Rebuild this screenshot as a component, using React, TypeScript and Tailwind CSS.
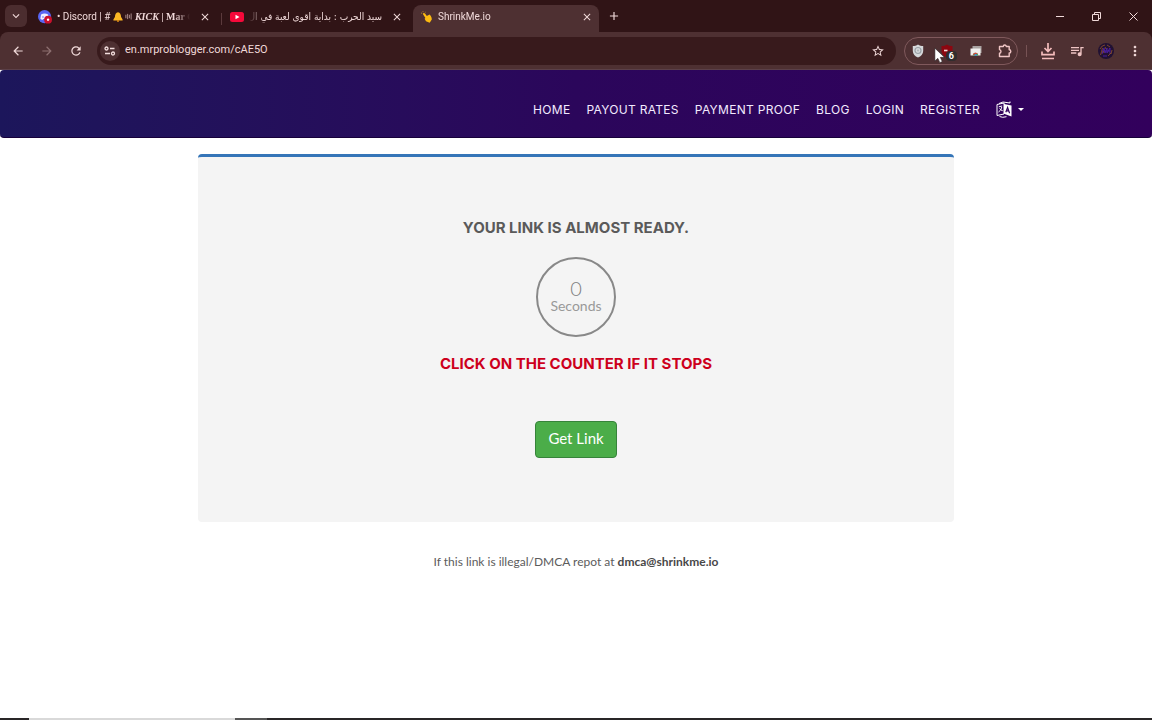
import type { ReactNode } from 'react';
import {
  MdAdd,
  MdArrowBack,
  MdArrowForward,
  MdClose,
  MdKeyboardArrowDown,
  MdMoreVert,
  MdQueueMusic,
  MdRefresh,
  MdStarBorder,
} from 'react-icons/md';

const navLinks = ['Home', 'Payout Rates', 'Payment Proof', 'Blog', 'Login', 'Register'];

function DiscordIcon() {
  return (
    <svg viewBox="0 0 16 16" className="size-[14px] shrink-0" aria-hidden="true">
      <circle cx="7.500" cy="7.500" r="7.500" fill="#5865f2" />
      <path d="M3.500 5q4-2 8 0l.8 5q-1.800 1.700-3 1.200l-.4-1H6l-.5 1Q4 11.500 2.700 10Z" fill="#f1efff" />
      <circle cx="5.700" cy="8" r=".9" fill="#5865f2" />
      <circle cx="11.500" cy="11" r="4.500" fill="#c9102c" />
      <circle cx="11.500" cy="11" r="1.400" fill="#fff" />
    </svg>
  );
}

function BellIcon() {
  return (
    <svg viewBox="0 0 10 10" className="inline size-[10px]" aria-hidden="true">
      <path d="M5 .2C2.800.5 2.100 2.400 1.900 5L.4 7.600v.8h9.200v-.8L8.100 5C7.900 2.400 7.200.5 5 .2Z" fill="#fbb724" />
      <circle cx="5" cy="9" r="1" fill="#e08a12" />
    </svg>
  );
}

function SpeakerIcon() {
  return (
    <svg viewBox="0 0 8 10" className="inline h-[9px] w-[7px]" fill="none" stroke="#b99c9d" aria-hidden="true">
      <path d="M1 3v4M3 2v6M5 3v4M7 1.500v7" />
    </svg>
  );
}

function YoutubeIcon() {
  return (
    <svg viewBox="0 0 14 10" className="h-[10px] w-[14px] shrink-0" aria-hidden="true">
      <rect width="14" height="10" rx="2.500" fill="#f5093a" />
      <path d="M5.500 2.800 9.500 5l-4 2.200Z" fill="#fff" />
    </svg>
  );
}

function HandIcon() {
  return (
    <svg viewBox="0 0 12 12" className="size-3 shrink-0" aria-hidden="true">
      <path
        d="M2.300 2.200c.7-.5 1.300-.2 1.700.4l1.800 2.500 2.800-1.500c1.200 1 2.300 3.200 2.200 5L8.700 11.700 5 10.300 3.600 7.700l.8-.8L2 3.300c-.2-.4-.1-.8.3-1.100Z"
        fill="#fdbb11"
      />
      <path d="M.8 2.800.3 1.500M2 1.200 2 .2M3.800 1.800l.8-.7" stroke="#c88f2a" strokeWidth=".8" />
    </svg>
  );
}

function SiteInfoIcon() {
  return (
    <svg viewBox="0 0 12 10" className="h-[10px] w-3" fill="none" stroke="#f3dede" strokeWidth="1.300" aria-hidden="true">
      <circle cx="2.500" cy="2.500" r="1.500" />
      <path d="M6 2.500h4.500M1 7.500h5" />
      <circle cx="9" cy="7.500" r="1.500" />
    </svg>
  );
}

function ShieldIcon() {
  return (
    <svg viewBox="0 0 12 14" className="h-[14px] w-3" aria-hidden="true">
      <path d="M6 .5C4.500 1.500 2.500 2 .8 2v5c0 3 2.200 5.300 5.200 6.500C9 12.300 11.200 10 11.200 7V2C9.500 2 7.500 1.500 6 .5Z" fill="#d5d8da" />
      <circle cx="6" cy="6.500" r="3" fill="none" stroke="#9ba2a7" strokeWidth="1.200" />
      <circle cx="6" cy="6.500" r="1" fill="#aeb4b8" />
    </svg>
  );
}

function BlockerIcon() {
  return (
    <svg viewBox="0 0 12 14" className="h-[14px] w-3" aria-hidden="true">
      <path d="M6 .5C4.500 1.500 2.500 2 .5 2v5c0 3 2.500 5.300 5.500 6.500C9 12.300 11.500 10 11.500 7V2C9.500 2 7.500 1.500 6 .5Z" fill="#8c0710" />
      <path d="M3 6.500h3.500" stroke="#f6d9d9" strokeWidth="1.600" />
    </svg>
  );
}

function StoreIcon() {
  return (
    <svg viewBox="0 0 12 12" className="size-3" aria-hidden="true">
      <path d="M2.500 1h9v7h-9Z" fill="#aaa3a2" />
      <path d="M.5 3.500h10v7H.5Z" fill="#f2f0ef" />
      <path d="M2.800 10.500a2.700 2.700 0 0 1 5.400 0Z" fill="#3fa45b" />
      <path d="M2.800 10.300a2.700 2.700 0 0 1 5-1.300L5.500 9Z" fill="#d9483b" />
      <circle cx="5.600" cy="10" r="1" fill="#4a84df" />
    </svg>
  );
}

function ExtensionsIcon() {
  return (
    <svg viewBox="0 0 14 14" className="size-[14px]" fill="none" stroke="#f0c5c5" strokeWidth="1.400" strokeLinejoin="round" aria-hidden="true">
      <path d="M1.500 2.500h3.800a1.500 1.500 0 0 1 3 0h2.900v3.300a1.600 1.600 0 0 1 0 3.200v3.500H1.500V9.300a1.900 1.900 0 0 0 0-3.700Z" />
    </svg>
  );
}

function DownloadIcon() {
  return (
    <svg viewBox="0 0 14 18" className="h-[18px] w-[14px]" fill="none" stroke="#f4bcbc" strokeWidth="1.700" aria-hidden="true">
      <path d="M7 1v8.500M3.500 6 7 9.500 10.500 6M1 9.500v3.200h12V9.500M1 16.500h12" />
    </svg>
  );
}

function AvatarIcon() {
  return (
    <svg viewBox="0 0 16 16" className="size-4" fill="none" aria-hidden="true">
      <circle cx="8" cy="8" r="8" fill="#211133" />
      <path d="M4 11 6 5l1 5 2-5v5l3-5v6M4 8h8M5 13h4" stroke="#4a1f9c" />
      <path d="M2 6q2-4 5-4M9 2l3 2M2.500 12q1-3 2-7M13 11l1-4M10 13l3-3M7 4l1 2M5 8l1 2" stroke="#94522b" strokeWidth=".8" />
    </svg>
  );
}

function TranslateIcon() {
  return (
    <svg viewBox="0 0 16 17" className="h-[17px] w-4" aria-hidden="true">
      <path d="M1 3.500 8 2v11L1 14.500Z" fill="none" stroke="#fff" />
      <path d="M3 2.500 7 1l7 1V.5" fill="none" stroke="#fff" />
      <path d="M8 3l7.500 1.500v11L8 12.800Z" fill="#fff" />
      <path d="M2.800 5.800 6.200 5M3.500 7.500q1.500 2 3.200 2.200M5.800 6q-.6 3.500-3.300 5M3.500 15.500q3 1.500 7 .2" fill="none" stroke="#fff" />
      <path d="M9.800 11.300 11.600 6.500l2 5.700M10.400 9.600l2.600.6" fill="none" stroke="#30005c" strokeWidth="1.200" />
    </svg>
  );
}

function CursorIcon() {
  return (
    <svg viewBox="0 0 10 15" className="absolute top-[47px] left-[934px] h-[17px] w-[11px]" aria-hidden="true">
      <path d="M.8.8v11.700l2.700-2.400 1.800 3.900 2.200-1-1.800-3.800h3.800Z" fill="#fff" stroke="#252021" strokeWidth=".5" />
    </svg>
  );
}

function IconButton({ label, children }: { label: string; children: ReactNode }) {
  return (
    <button type="button" aria-label={label} className="relative flex h-7 w-[29px] shrink-0 items-center justify-center">
      {children}
    </button>
  );
}

function Tab({ icon, rtl, active, children }: { icon: ReactNode; rtl?: boolean; active?: boolean; children: ReactNode }) {
  return (
    <div
      className={`flex h-[27px] items-center gap-[5px] pb-1 pl-2 ${
        active ? 'w-[186px] rounded-t-lg bg-[#4e3032] pr-[2px]' : 'w-[191px] pr-[6px]'
      }`}
    >
      {icon}
      <span
        dir={rtl ? 'rtl' : 'ltr'}
        className={`min-w-0 flex-1 overflow-hidden text-[10px] leading-4 whitespace-nowrap ${
          rtl
            ? "[mask-image:linear-gradient(to_left,black_88%,transparent)] font-['DejaVu_Sans_Condensed','DejaVu_Sans',sans-serif]"
            : '[mask-image:linear-gradient(to_right,black_88%,transparent)]'
        }`}
      >
        {children}
      </span>
      <button type="button" aria-label="Close tab" className="flex w-5 items-center justify-center">
        <MdClose className="size-3" />
      </button>
    </div>
  );
}

function BrowserBar() {
  return (
    <header className="relative bg-[#301416] font-[Roboto,sans-serif] text-[#f0d9d9]">
      <div className="flex h-8 items-end">
        <button type="button" aria-label="Search tabs" className="mb-[5px] ml-[5px] flex size-[22px] items-center justify-center rounded-md bg-[#4b2d2f]">
          <MdKeyboardArrowDown className="size-[14px]" />
        </button>
        <div className="ml-[3px] flex items-center">
          <Tab icon={<DiscordIcon />}>
            • Discord | # <BellIcon /> <SpeakerIcon />{' '}
            <span className="font-['Liberation_Serif',serif] font-bold">
              <i>KICK</i> | Mar G
            </span>
          </Tab>
          <span className="h-3 w-px bg-[#5b3a3c]" />
          <Tab rtl icon={<YoutubeIcon />}>
            سيد الحرب : بداية اقوى لعبة في ال
          </Tab>
          <Tab active icon={<HandIcon />}>
            ShrinkMe.io
          </Tab>
        </div>
        <div className="flex h-8 items-center">
          <IconButton label="New tab">
            <MdAdd className="size-[14px]" />
          </IconButton>
        </div>
        <div className="ml-auto flex h-8 items-center">
          <button type="button" aria-label="Minimize" className="flex h-8 w-[37px] items-center justify-center">
            <span className="h-px w-2 bg-current" />
          </button>
          <button type="button" aria-label="Restore" className="flex h-8 w-[37px] items-center justify-center">
            <svg viewBox="0 0 9 9" className="size-[9px]" fill="none" stroke="currentColor">
              <path d="M.5 2.500h6v6h-6ZM2.500 2.500v-2h6v6h-2" />
            </svg>
          </button>
          <button type="button" aria-label="Close" className="flex h-8 w-[37px] items-center justify-center">
            <svg viewBox="0 0 9 9" className="size-[9px]" fill="none" stroke="currentColor">
              <path d="m.5.5 8 8M8.500.5l-8 8" />
            </svg>
          </button>
        </div>
      </div>
      <div className="flex h-[38px] items-center rounded-t-lg border-b border-[#5b4048] bg-[#4e3032] pr-[3px] pl-[3px]">
        <IconButton label="Back">
          <MdArrowBack className="size-[14px]" />
        </IconButton>
        <IconButton label="Forward">
          <MdArrowForward className="size-[14px] text-[#8e7071]" />
        </IconButton>
        <IconButton label="Reload">
          <MdRefresh className="size-[14px]" />
        </IconButton>
        <div className="ml-[7px] flex h-7 flex-1 items-center rounded-full bg-[#381a1c] pl-[3px]">
          <button type="button" aria-label="Site information" className="flex size-5 items-center justify-center rounded-full bg-[#4e3032]">
            <SiteInfoIcon />
          </button>
          <input
            aria-label="Address"
            defaultValue="en.mrproblogger.com/cAE5O"
            className="ml-[5px] min-w-0 flex-1 bg-transparent text-[11px] outline-none"
          />
          <IconButton label="Bookmark">
            <MdStarBorder className="size-[14px]" />
          </IconButton>
          <span className="w-1" />
        </div>
        <div className="ml-2 flex h-7 w-[114px] items-center justify-center rounded-full border border-[#80595c]">
          <IconButton label="Privacy shield">
            <ShieldIcon />
          </IconButton>
          <IconButton label="Content blocker">
            <BlockerIcon />
            <span className="absolute right-1 bottom-1 rounded-sm bg-[#302d2e] px-[3px] text-[9px] leading-[10px] font-bold text-white">6</span>
          </IconButton>
          <IconButton label="Web store">
            <StoreIcon />
          </IconButton>
          <IconButton label="Extensions">
            <ExtensionsIcon />
          </IconButton>
        </div>
        <span className="mr-[6px] ml-2 h-3 w-px bg-[#775355]" />
        <IconButton label="Downloads">
          <DownloadIcon />
        </IconButton>
        <IconButton label="Media">
          <MdQueueMusic className="size-4 text-[#f0c5c5]" />
        </IconButton>
        <IconButton label="Profile">
          <AvatarIcon />
        </IconButton>
        <IconButton label="Menu">
          <MdMoreVert className="size-4" />
        </IconButton>
      </div>
      <CursorIcon />
    </header>
  );
}

export default function App() {
  return (
    <div className="flex min-h-screen flex-col bg-white">
      <BrowserBar />
      <nav className="flex h-[68px] items-center justify-end gap-4 rounded border-b border-[#17003a] bg-linear-to-r from-[#1c165b] via-[#2b065b] to-[#32005c] pt-3 pr-32 font-[Inter,sans-serif] text-xs text-[#f3eaff]">
        {navLinks.map((link) => (
          <a key={link} href="#" className="tracking-wide uppercase">
            {link}
          </a>
        ))}
        <button type="button" aria-label="Language" className="flex items-center gap-[6px]">
          <TranslateIcon />
          <span className="border-x-[3px] border-t-[3px] border-x-transparent border-t-white" />
        </button>
      </nav>
      <main className="flex flex-1 flex-col items-center pt-4 font-[Lato,sans-serif]">
        <section className="flex w-full max-w-[756px] flex-col items-center rounded border-t-[3px] border-[#3575b8] bg-[#f4f4f4] pt-[61px] pb-16">
          <h1 className="font-[Inter,sans-serif] text-[15px] leading-5 font-bold text-[#5a5a5a]">YOUR LINK IS ALMOST READY.</h1>
          <button type="button" className="mt-[19px] flex size-20 flex-col items-center justify-center rounded-full border-2 border-[#888] pb-[2px] text-[#808080]">
            <span className="text-xl leading-5 font-light">0</span>
            <span className="text-sm leading-4 text-[#999]">Seconds</span>
          </button>
          <h2 className="mt-[17px] font-[Inter,sans-serif] text-[15px] leading-5 font-bold text-[#cd001c]">CLICK ON THE COUNTER IF IT STOPS</h2>
          <a
            href="#"
            className="mt-[47px] flex h-[37px] w-[82px] items-center justify-center rounded border border-[#36833a] bg-[#4bad49] pb-[2px] text-[15px] text-white"
          >
            Get Link
          </a>
        </section>
        <p className="mt-8 text-xs leading-4 text-[#5c5c5c]">
          If this link is illegal/DMCA repot at <b className="text-[#484848]">dmca@shrinkme.io</b>
        </p>
      </main>
      <div className="flex h-[2px] bg-[#292627]">
        <span className="ml-[29px] w-[206px] bg-[#d9d9d9]" />
        <span className="w-8 bg-[#555]" />
      </div>
    </div>
  );
}
